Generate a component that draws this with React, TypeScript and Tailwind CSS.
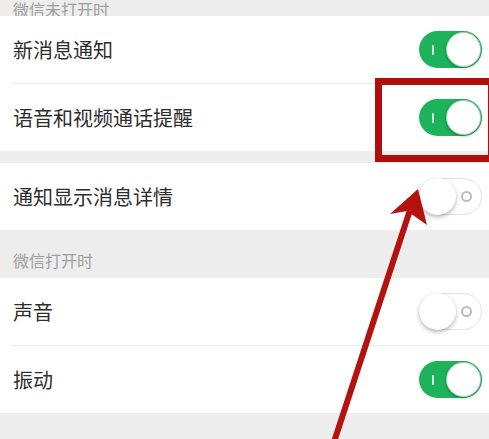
import React from "react";

function Toggle({ on }: { on: boolean }) {
  if (on) {
    return (
      <div className="w-[63px] h-[37px] rounded-full bg-[#1db35a] flex items-center justify-between p-[1px] pl-[13px]">
        <div className="w-[2px] h-[10px] bg-white/80 rounded" />
        <div className="w-[35px] h-[35px] rounded-full bg-white border border-[#1a9e50]/40 shadow-[0_1px_3px_rgba(0,0,0,0.35)]" />
      </div>
    );
  }
  return (
    <div className="w-[63px] h-[37px] rounded-full bg-white border border-[#e2e2e2] flex items-center justify-between pr-[9px]">
      <div className="-ml-px w-[37px] h-[37px] rounded-full bg-white shadow-[0_2px_4px_rgba(0,0,0,0.3)]" />
      <div className="w-[11px] h-[11px] rounded-full border-2 border-[#bdbdbd]" />
    </div>
  );
}

function Row({ label, on }: { label: string; on: boolean }) {
  return (
    <div className="h-[67px] flex items-center justify-between pl-[13px] pr-[7px] bg-white">
      <span className="text-[20px] text-[#2e2e2e]">{label}</span>
      <Toggle on={on} />
    </div>
  );
}

function Divider() {
  return (
    <div className="bg-white pl-[12px]">
      <div className="h-px bg-[#ebebeb]" />
    </div>
  );
}

export default function App() {
  return (
    <div
      className="relative w-[489px] h-[439px] overflow-hidden bg-[#ededed] flex flex-col"
      style={{ fontFamily: '"Noto Sans CJK SC", "Noto Sans", sans-serif' }}
    >
      <div className="h-[16px] shrink-0 overflow-hidden pl-[13px] flex items-end">
        <span className="text-[16px] leading-[20px] text-[#a0a0a0] translate-y-[3px]">微信未打开时</span>
      </div>
      <Row label="新消息通知" on />
      <Divider />
      <Row label="语音和视频通话提醒" on />
      <div className="h-[12px] shrink-0" />
      <Row label="通知显示消息详情" on={false} />
      <div className="h-[48px] shrink-0 flex items-center pl-[13px] pt-[12px]">
        <span className="text-[16px] text-[#a0a0a0]">微信打开时</span>
      </div>
      <Row label="声音" on={false} />
      <Divider />
      <Row label="振动" on />

      <div className="absolute left-[375px] top-[78px] w-[120px] h-[84px] border-[7px] border-[#b10d0d]" />
      <svg className="absolute left-0 top-0" width="489" height="439" viewBox="0 0 489 439">
        <line x1="333" y1="445" x2="410" y2="210" stroke="#b3120f" strokeWidth="6" />
        <polygon points="418,189 390,214 407,211 427,225" fill="#b3120f" />
      </svg>
    </div>
  );
}
